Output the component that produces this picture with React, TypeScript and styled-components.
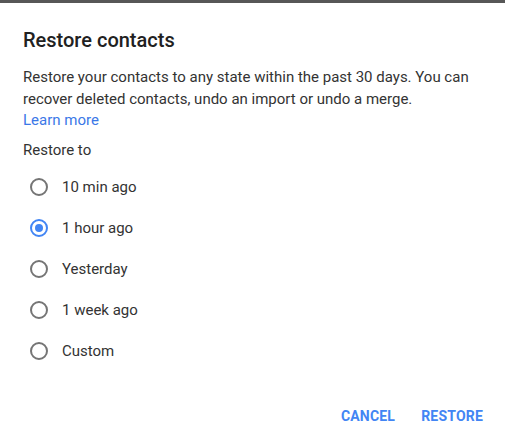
import React, { useState } from 'react'
import styled, { createGlobalStyle } from 'styled-components'

const GlobalStyle = createGlobalStyle`
  html, body {
    margin: 0;
    padding: 0;
    background: #ffffff;
    font-family: Roboto, 'Liberation Sans', Arial, sans-serif;
  }
`

const TopBar = styled.div`
  height: 3px;
  background: #575757;
`

const Dialog = styled.div`
  padding: 24px 23px 0 23px;
  color: #212121;
`

const Title = styled.h1`
  margin: 0;
  font-size: 20px;
  font-weight: 500;
  line-height: 26px;
  color: #212121;
`

const Body = styled.p`
  margin: 14px 0 0 0;
  font-size: 15px;
  line-height: 21.5px;
  color: #333333;
`

const Link = styled.a`
  color: #3b78e7;
  text-decoration: none;
  cursor: pointer;
`

const Label = styled.div`
  margin-top: 7px;
  font-size: 15px;
  line-height: 22px;
  color: #333333;
`

const Options = styled.div`
  display: flex;
  flex-direction: column;
  margin-top: 15px;
  gap: 19px;
`

const Option = styled.label`
  display: flex;
  align-items: center;
  gap: 14px;
  padding-left: 7px;
  height: 22px;
  font-size: 15px;
  color: #333333;
  cursor: pointer;
`

const RadioCircle = styled.span<{ $checked: boolean }>`
  width: 14px;
  height: 14px;
  border-radius: 50%;
  border: 2px solid ${(p) => (p.$checked ? '#4285f4' : '#757575')};
  display: flex;
  align-items: center;
  justify-content: center;
  flex-shrink: 0;

  &::after {
    content: '';
    width: 8px;
    height: 8px;
    border-radius: 50%;
    background: ${(p) => (p.$checked ? '#4285f4' : 'transparent')};
  }
`

const Actions = styled.div`
  display: flex;
  justify-content: flex-end;
  gap: 10px;
  margin-top: 38px;
  margin-right: -9px;
`

const ActionButton = styled.button`
  border: none;
  background: transparent;
  font-family: Roboto, 'Liberation Sans', Arial, sans-serif;
  font-size: 14px;
  font-weight: 700;
  color: #4285f4;
  padding: 8px 8px;
  letter-spacing: 0.2px;
  cursor: pointer;
`

const options = ['10 min ago', '1 hour ago', 'Yesterday', '1 week ago', 'Custom']

export default function App() {
  const [selected, setSelected] = useState('1 hour ago')

  return (
    <>
      <GlobalStyle />
      <TopBar />
      <Dialog>
        <Title>Restore contacts</Title>
        <Body>
          Restore your contacts to any state within the past 30 days. You can
          recover deleted contacts, undo an import or undo a merge.
          <br />
          <Link>Learn more</Link>
        </Body>
        <Label>Restore to</Label>
        <Options>
          {options.map((o) => (
            <Option key={o} onClick={() => setSelected(o)}>
              <RadioCircle $checked={selected === o} />
              {o}
            </Option>
          ))}
        </Options>
        <Actions>
          <ActionButton>CANCEL</ActionButton>
          <ActionButton>RESTORE</ActionButton>
        </Actions>
      </Dialog>
    </>
  )
}
